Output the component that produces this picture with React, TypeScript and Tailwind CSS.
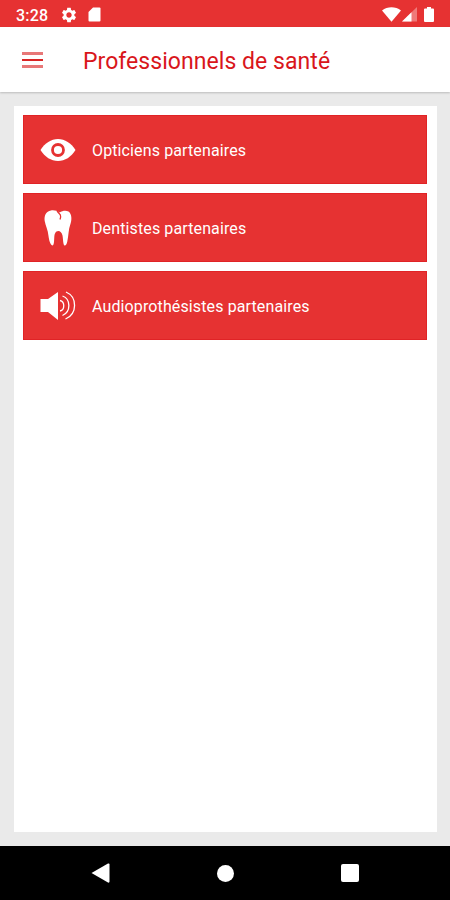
import type { ReactNode } from 'react';
import { MdSettings } from 'react-icons/md';

interface Partner {
    label: string;
    icon: ReactNode;
}

const EyeIcon = () => (
    <svg className="h-6 w-9" viewBox="0 0 36 24" fill="none">
        <path d="M0.500 12C5 5 11 1 18 1s13 4 17.500 11C31 19 25 23 18 23S5 19 0.500 12z" fill="#fff" />
        <circle cx="18" cy="12" r="5.500" stroke="#e63232" strokeWidth="2.800" />
    </svg>
);

const ToothIcon = () => (
    <svg className="h-9 w-7" viewBox="0 0 28 36" fill="#fff">
        <path d="M7 0.500C10.500 0 13 1 15.500 2.500C18.500 0.500 22 0 24.500 1.500C28 4 28 10 26.300 14.500C24.500 19 24.500 26 23.300 31.500C22.700 34.500 21.500 36 20.500 35.500C19 34.500 19.200 29 18.500 25.500C17.800 22.500 16.300 21 14.300 21C11.500 21 10.500 24 10.300 27C10 31 10.300 35.500 8.300 35.500C6.300 35 5 30 4.500 26C4 20 1.500 15.500 0.700 11C0 5.500 2 1.300 7 0.500z" />
        <path d="M13 1L16.300 4.800C17 6.500 16.700 8 16 9.500" fill="none" stroke="#e63232" strokeWidth="1.300" />
    </svg>
);

const SpeakerIcon = () => (
    <svg className="h-8 w-9" viewBox="0 0 36 32" fill="none">
        <path d="M0.500 9h7.500L18 2v28L8 22H0.500z" fill="#fff" />
        <g stroke="#fff" strokeWidth="1.300">
            <path d="M20 10.500C25 11.500 25 20 20 21" />
            <path d="M22.500 6C31 9 31 22 22.500 25.500" />
            <path d="M26 2C37.500 7 37.500 24 25.500 29" />
        </g>
    </svg>
);

const partners: Partner[] = [
    { label: 'Opticiens partenaires', icon: <EyeIcon /> },
    { label: 'Dentistes partenaires', icon: <ToothIcon /> },
    { label: 'Audioprothésistes partenaires', icon: <SpeakerIcon /> },
];

function StatusBar() {
    return (
        <div className="flex h-[27px] shrink-0 items-center bg-[#e63232] pt-0.5 pr-4 pl-4 text-white">
            <span className="w-[44px] pt-0.5 text-base font-medium tracking-[0.2px]">3:28</span>
            <MdSettings className="size-[18px]" />
            <svg className="ml-[10px] h-[15px] w-[13px]" viewBox="0 0 13 15" fill="#fff">
                <path d="M5 0.500h6.500q1 0 1 1v12q0 1-1 1h-10q-1 0-1-1V5z" />
            </svg>
            <svg className="ml-auto h-[15px] w-[19px]" viewBox="0 0 19 15" fill="#fff">
                <path d="M0 3.500C5.500-0.800 13.500-0.800 19 3.500L9.500 14.800z" />
            </svg>
            <svg className="ml-[1px] h-[15px] w-[15px]" viewBox="0 0 15 15" fill="#fff">
                <path d="M0 14.500L15 0v14.500z" opacity="0.350" />
                <path d="M0 14.500L9.500 5.300v9.200z" />
            </svg>
            <svg className="ml-[7px] h-[15px] w-[10px]" viewBox="0 0 10 15" fill="#fff">
                <path d="M3 0h4v1.500h2q1 0 1 1V14q0 1-1 1H1q-1 0-1-1V2.500q0-1 1-1h2z" />
            </svg>
        </div>
    );
}

export default function App() {
    return (
        <div className="flex h-[900px] w-[450px] flex-col overflow-hidden bg-[#eaeaea] font-['Roboto',sans-serif]">
            <StatusBar />

            {/* Top App Bar */}
            <header className="z-10 flex h-[65px] shrink-0 items-center bg-white pl-[22px] shadow-[0_1px_2px_rgba(0,0,0,0.2)]">
                <button className="flex w-[21px] flex-col gap-1" aria-label="Menu">
                    <span className="h-[3px] bg-[#e87878]" />
                    <span className="h-[2px] bg-[#d92525]" />
                    <span className="h-[3px] bg-[#e87878]" />
                </button>
                <h1 className="ml-10 pt-1.5 text-[23px] tracking-[0.05px] whitespace-nowrap text-[#d9161b]">
                    Professionnels de santé
                </h1>
            </header>

            {/* Partner list */}
            <main className="flex min-h-0 flex-1 py-3.5 pr-[13px] pl-3.5">
                <div className="flex flex-1 flex-col gap-[9.5px] bg-white pt-[9px] pr-2.5 pl-[9px]">
                    {partners.map((partner) => (
                        <button
                            key={partner.label}
                            className="flex h-[68.5px] shrink-0 items-center border border-[#e02326] bg-[#e63232] pl-4 text-left text-white"
                        >
                            <span className="flex w-9 justify-center pt-px">{partner.icon}</span>
                            <span className="ml-4 pt-[3px] text-base tracking-[0.12px] whitespace-nowrap">
                                {partner.label}
                            </span>
                        </button>
                    ))}
                </div>
            </main>

            {/* Navigation bar */}
            <nav className="flex h-[54px] shrink-0 items-center justify-between bg-black pr-[91px] pl-[91px]">
                <svg className="h-5 w-[19px]" viewBox="0 0 19 20" fill="#fff">
                    <path d="M0.500 10L17 0.500q1.500-0.500 1.500 1v17q0 1.500-1.500 1z" />
                </svg>
                <span className="size-[17px] rounded-full bg-white" />
                <span className="size-[18px] rounded-[2px] bg-white" />
            </nav>
        </div>
    );
}
